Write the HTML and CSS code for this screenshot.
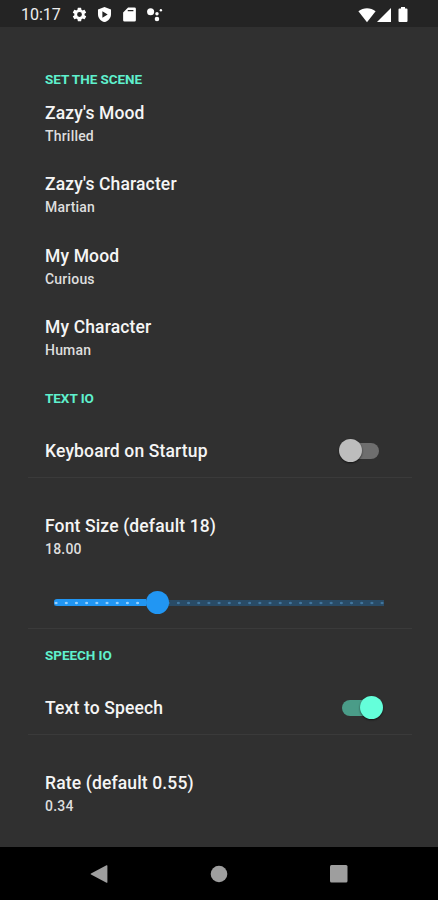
FILE: index.html
```html
<!DOCTYPE html>
<html lang="en">
<head>
    <meta charset="UTF-8">
    <meta name="viewport" content="width=device-width, initial-scale=1.0">
    <title>Settings</title>
    <link rel="stylesheet" href="styles.css">
</head>
<body>
    <header class="status-bar">
        <span class="clock">10:17</span>
        <div class="status-icons">
            <svg width="17" height="17" viewBox="0 0 24 24"><path fill="#fff" fill-rule="evenodd" d="M19.1 12.9a7 7 0 0 0 0-1.8l2-1.6a.5.5 0 0 0 .1-.6l-1.9-3.3a.5.5 0 0 0-.6-.2l-2.4 1a7 7 0 0 0-1.6-1l-.4-2.5a.5.5 0 0 0-.5-.4h-3.8a.5.5 0 0 0-.5.4l-.3 2.5a7 7 0 0 0-1.7 1l-2.4-1a.5.5 0 0 0-.6.2L2.7 8.9a.5.5 0 0 0 .1.6l2 1.6a7 7 0 0 0 0 1.8l-2 1.6a.5.5 0 0 0-.1.6l1.9 3.3a.5.5 0 0 0 .6.2l2.4-1a7 7 0 0 0 1.6 1l.4 2.5a.5.5 0 0 0 .5.4h3.8a.5.5 0 0 0 .5-.4l.3-2.5a7 7 0 0 0 1.7-1l2.4 1a.5.5 0 0 0 .6-.2l1.9-3.3a.5.5 0 0 0-.1-.6zM12 15.4a3.4 3.4 0 1 1 0-6.8 3.4 3.4 0 0 1 0 6.8z"/></svg>
            <svg width="17" height="17" viewBox="0 0 24 24"><path fill="#fff" fill-rule="evenodd" d="M12 1.5L2.8 5v6.5c0 5.2 3.8 9.8 9.2 11.2 5.4-1.4 9.2-6 9.2-11.2V5zM9 7.5l7.5 4.5L9 16.5z"/></svg>
            <svg width="17" height="17" viewBox="0 0 24 24"><path fill="#fff" fill-rule="evenodd" d="M10 2h9a2 2 0 0 1 2 2v16a2 2 0 0 1-2 2H5a2 2 0 0 1-2-2V9zM9.5 5.5v2h8v-2z"/></svg>
            <svg width="17" height="17" viewBox="0 0 24 24"><g fill="#fff"><circle cx="6.5" cy="8" r="5"/><circle cx="15.5" cy="11" r="2.4"/><circle cx="21" cy="6" r="1.7"/><circle cx="15.5" cy="18.5" r="3.2"/></g></svg>
        </div>
        <div class="signal-icons">
            <svg width="18" height="16" viewBox="0 0 18 16"><path fill="#fff" d="M9 15.2L.4 4.2C5.4.1 12.6.1 17.6 4.2z"/></svg>
            <svg width="16" height="16" viewBox="0 0 16 16"><path fill="#fff" d="M15 1v14H1z"/></svg>
            <svg width="10" height="16" viewBox="0 0 10 16"><path fill="#fff" d="M3 0h4v1.6h1.5a1 1 0 0 1 1 1V14a1 1 0 0 1-1 1h-7a1 1 0 0 1-1-1V2.6a1 1 0 0 1 1-1H3z"/></svg>
        </div>
    </header>

    <main class="settings">
        <h2 class="section-title">SET THE SCENE</h2>
        <div class="item">
            <div class="item-title">Zazy's Mood</div>
            <div class="item-value">Thrilled</div>
        </div>
        <div class="item">
            <div class="item-title">Zazy's Character</div>
            <div class="item-value">Martian</div>
        </div>
        <div class="item">
            <div class="item-title">My Mood</div>
            <div class="item-value">Curious</div>
        </div>
        <div class="item">
            <div class="item-title">My Character</div>
            <div class="item-value">Human</div>
        </div>

        <h2 class="section-title spaced">TEXT IO</h2>
        <div class="switch-row">
            <div class="item-title">Keyboard on Startup</div>
            <div class="switch"><span class="thumb"></span></div>
        </div>
        <div class="slider-item">
            <div class="item-title">Font Size (default 18)</div>
            <div class="item-value">18.00</div>
            <div class="slider">
                <div class="slider-fill"></div>
                <div class="slider-thumb"></div>
            </div>
        </div>

        <h2 class="section-title spaced">SPEECH IO</h2>
        <div class="switch-row">
            <div class="item-title">Text to Speech</div>
            <div class="switch on"><span class="thumb"></span></div>
        </div>
        <div class="slider-item">
            <div class="item-title">Rate (default 0.55)</div>
            <div class="item-value">0.34</div>
        </div>
    </main>

    <nav class="nav-bar">
        <svg width="18" height="18" viewBox="0 0 18 18"><path fill="#9e9e9e" d="M16.5.3a.6.6 0 0 1 .9.5v16.4a.6.6 0 0 1-.9.5L1 9.5a.6.6 0 0 1 0-1z"/></svg>
        <svg width="18" height="18" viewBox="0 0 18 18"><circle cx="9" cy="9" r="8.3" fill="#9e9e9e"/></svg>
        <svg width="18" height="18" viewBox="0 0 18 18"><rect width="17.5" height="17.5" rx="1.5" fill="#9e9e9e"/></svg>
    </nav>
</body>
</html>
```
FILE: styles.css
```css
* { margin: 0; padding: 0; box-sizing: border-box; }
body {
    font-family: Roboto, sans-serif;
    background: #303030;
    color: #f5f5f5;
    width: 438px;
    height: 900px;
    display: flex;
    flex-direction: column;
    overflow: hidden;
}
svg { display: block; }

/* status bar */
.status-bar {
    height: 27px;
    flex: none;
    background: #242424;
    display: flex;
    align-items: center;
    padding: 2px 30px 0 21px;
}
.clock { font-size: 16px; line-height: 20px; width: 50px; color: #eee; }
.status-icons { display: flex; gap: 8px; }
.signal-icons { display: flex; margin-left: auto; }
.signal-icons svg:last-child { margin-left: 6px; }

/* settings list */
.settings { flex: 1; min-height: 0; padding: 44px 26px 0 28px; overflow: hidden; }
.section-title {
    font-size: 13.5px;
    font-weight: 700;
    line-height: 16px;
    letter-spacing: -0.05px;
    color: #5ff0cd;
    padding-left: 17px;
}
.section-title.spaced { margin-top: 18px; }
.item { height: 71.3px; padding: 16px 17px 0; }
.item-title { font-size: 17.5px; font-weight: 500; line-height: 20px; letter-spacing: 0.14px; }
.item-value { font-size: 14px; font-weight: 500; line-height: 18px; letter-spacing: 0.2px; margin-top: 4px; color: #dedede; }

.switch-row {
    height: 54px;
    margin-top: 18px;
    padding: 0 33px 0 17px;
    display: flex;
    align-items: center;
    justify-content: space-between;
    border-bottom: 1px solid #3a3a3a;
}
.switch {
    width: 37px;
    height: 16px;
    border-radius: 8px;
    background: #6e6e6e;
    display: flex;
    align-items: center;
}
.thumb {
    width: 23px;
    height: 23px;
    flex: none;
    border-radius: 50%;
    background: #bdbdbd;
    margin-left: -3px;
    box-shadow: 0 1px 2px rgba(0, 0, 0, 0.6);
}
.switch.on { background: #4a9c88; justify-content: flex-end; }
.switch.on .thumb { background: #64ffda; margin: 0 -4px 0 0; }

.slider-item {
    height: 151px;
    padding: 38px 28px 0 17px;
    border-bottom: 1px solid #3a3a3a;
}
.slider {
    height: 23px;
    margin: 33px 0 0 9px;
    display: flex;
    align-items: center;
    background:
        radial-gradient(circle, #42779f 1px, transparent 1.6px) -3px 50% / 10.2px 6px repeat-x,
        linear-gradient(#294b66, #294b66) 0 50% / 100% 6px no-repeat;
}
.slider-fill {
    width: 92px;
    height: 7px;
    border-radius: 3px 0 0 3px;
    background: radial-gradient(circle, #9bd0fa 1px, transparent 1.6px) -3px 50% / 10.2px 6px repeat-x #2196f3;
}
.slider-thumb { width: 23px; height: 23px; border-radius: 50%; background: #2196f3; }

/* navigation bar */
.nav-bar {
    height: 53px;
    flex: none;
    background: #000;
    display: flex;
    align-items: center;
    justify-content: space-between;
    padding: 0 90px;
}
```
